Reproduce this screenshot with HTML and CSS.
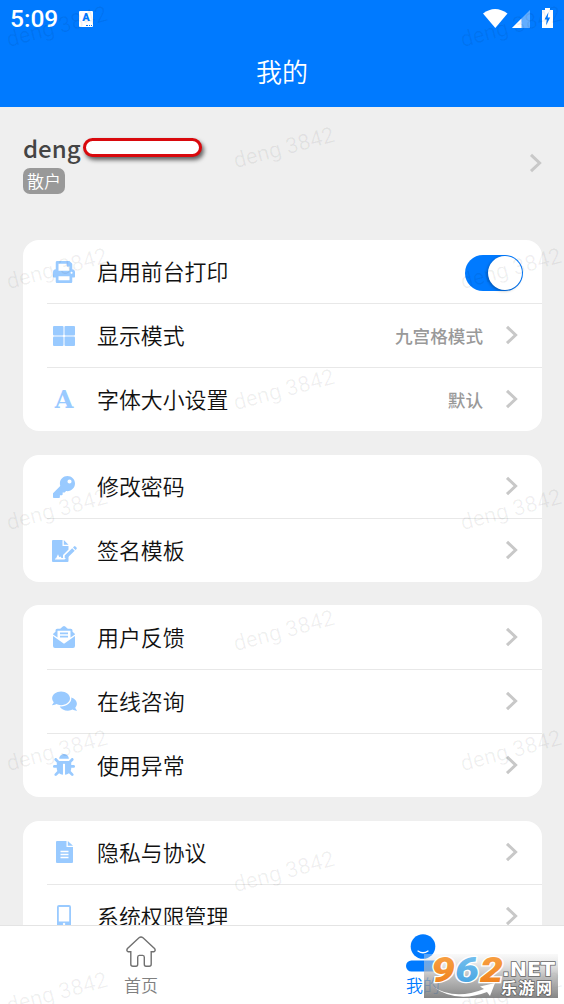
FILE: index.html
```html
<!DOCTYPE html>
<html lang="zh-CN">
<head>
<meta charset="utf-8">
<title>我的</title>
<link rel="stylesheet" href="styles.css">
</head>
<body>
<svg width="0" height="0" class="defs">
  <symbol id="arrow" viewBox="0 0 13 20"><path d="M2 1.800l8.600 8.200L2 18.200" fill="none" stroke="#c8c8c8" stroke-width="3"/></symbol>
</svg>
<div class="screen">
  <header class="header">
    <div class="status">
      <span class="clock">5:09</span>
      <span class="badge-a">A<i></i></span>
      <svg class="signals" width="72" height="24" viewBox="0 0 72 24">
        <path d="M1 5.500Q13 -3.500 25.500 5.500L13.300 20z" fill="#fff"/>
        <path d="M30 20L48 2v18z" fill="#62adff"/><path d="M30 20L39.500 10.500V20z" fill="#fff"/>
        <path d="M60 2h3V0h5v2h3v18H60z" fill="#fff"/>
        <path d="M66.500 4l-4 7.500h2.300l-.8 6 4.200-8h-2.500z" fill="#007aff"/>
      </svg>
    </div>
    <h1 class="title">我的</h1>
  </header>
  <main class="content">
    <section class="profile">
      <div>
        <div class="name-line"><span class="name">deng</span><span class="redact"></span></div>
        <span class="tag">散户</span>
      </div>
      <svg class="arrow" width="13" height="20"><use href="#arrow"/></svg>
    </section>

    <section class="card">
      <div class="row"><span class="icon"><svg width="22" height="22" viewBox="0 0 512 512"><path d="M448 192V77.250c0-8.490-3.370-16.620-9.370-22.630L393.370 9.370c-6-6-14.140-9.370-22.630-9.370H96C78.330 0 64 14.330 64 32v160c-35.350 0-64 28.650-64 64v112c0 8.840 7.160 16 16 16h48v96c0 17.670 14.330 32 32 32h320c17.670 0 32-14.330 32-32v-96h48c8.840 0 16-7.160 16-16V256c0-35.350-28.650-64-64-64zm-64 256H128v-96h256v96zm0-224H128V64h192v48c0 8.840 7.160 16 16 16h48v96zm48 72c-13.250 0-24-10.750-24-24 0-13.260 10.750-24 24-24s24 10.740 24 24c0 13.250-10.750 24-24 24z"/></svg></span>
        <div class="cell"><span class="label">启用前台打印</span><span class="switch"><i></i></span></div></div>
      <div class="row"><span class="icon"><svg width="22" height="20" viewBox="0 0 22 20"><rect width="10.500" height="9.500" rx="1"/><rect x="11.500" width="10.500" height="9.500" rx="1"/><rect y="10.500" width="10.500" height="9.500" rx="1"/><rect x="11.500" y="10.500" width="10.500" height="9.500" rx="1"/></svg></span>
        <div class="cell"><span class="label">显示模式</span><span class="value">九宫格模式</span><svg class="arrow" width="13" height="20"><use href="#arrow"/></svg></div></div>
      <div class="row"><span class="icon letter">A</span>
        <div class="cell"><span class="label">字体大小设置</span><span class="value">默认</span><svg class="arrow" width="13" height="20"><use href="#arrow"/></svg></div></div>
    </section>

    <section class="card short">
      <div class="row"><span class="icon"><svg width="22" height="22" viewBox="0 0 512 512"><path d="M512 176C512 273.200 433.200 352 336 352c-11.220 0-22.190-1.060-32.830-3.070l-24 27A24 24 0 0 1 261.220 384H224v40c0 13.250-10.750 24-24 24h-40v40c0 13.250-10.750 24-24 24H24c-13.250 0-24-10.750-24-24v-78c0-6.400 2.500-12.500 7-17l161.800-161.800C163.100 213.800 160 195.300 160 176 160 78.800 238.800 0 336 0s176 78.500 176 176zM336 128a48 48 0 1 0 96 0 48 48 0 1 0-96 0z"/></svg></span>
        <div class="cell"><span class="label">修改密码</span><svg class="arrow" width="13" height="20"><use href="#arrow"/></svg></div></div>
      <div class="row"><span class="icon"><svg width="25" height="22" viewBox="0 0 25 22"><path d="M1 0h9.500v6h6v3.500L11 15v3H9.500l-1-1.500-1.200.8-1.300-3-2 4.200H3v1h9.500l4-4V21q0 1-1 1H1q-1 0-1-1V1q0-1 1-1zM11.800 0l4.700 4.700h-4.700z"/><path d="M12.700 15.500l7.500-7.300 2.500 2.500-7.500 7.400h-2.500zM21 7.400l1-1q.8-.7 1.500 0l1 1q.7.8 0 1.500l-1 1z"/></svg></span>
        <div class="cell"><span class="label">签名模板</span><svg class="arrow" width="13" height="20"><use href="#arrow"/></svg></div></div>
    </section>

    <section class="card">
      <div class="row"><span class="icon"><svg width="22" height="22" viewBox="0 0 22 22"><path d="M0 10l11 7.700L22 10v10q0 2-2 2H2q-2 0-2-2z"/><path fill-rule="evenodd" d="M0 8.500Q0 7.700 1 7l1.500-1.200V4.500q0-1.700 1.700-1.700h3L9.800.5q1.200-1 2.400 0l2.600 2.300h3q1.700 0 1.700 1.700v1.300L21 7q1 .8 1 1.500l-4.500 3V4.800h-13v6.700z"/><path d="M7 6.600h8v1.600H7zM7 9.800h8v1.600H7z"/></svg></span>
        <div class="cell"><span class="label">用户反馈</span><svg class="arrow" width="13" height="20"><use href="#arrow"/></svg></div></div>
      <div class="row"><span class="icon"><svg width="25" height="22" viewBox="0 0 576 512"><path d="M416 192c0-88.400-93.100-160-208-160S0 103.600 0 192c0 34.300 14.100 65.900 38 92-13.400 30.200-35.500 54.200-35.800 54.500-2.200 2.300-2.800 5.700-1.500 8.700S4.800 352 8 352c36.600 0 66.900-12.300 88.700-25 32.200 15.700 70.300 25 111.300 25 114.900 0 208-71.600 208-160zm122 220c23.900-26 38-57.700 38-92 0-66.900-53.500-124.200-129.300-148.100.9 6.600 1.300 13.300 1.300 20.100 0 105.900-107.700 192-240 192-10.800 0-21.300-.8-31.700-1.900C207.800 439.600 281.800 480 368 480c41 0 79.100-9.200 111.300-25 21.800 12.700 52.100 25 88.700 25 3.200 0 6.100-1.900 7.300-4.800 1.300-2.900.7-6.300-1.500-8.700-.3-.3-22.400-24.200-35.800-54.500z"/></svg></span>
        <div class="cell"><span class="label">在线咨询</span><svg class="arrow" width="13" height="20"><use href="#arrow"/></svg></div></div>
      <div class="row"><span class="icon"><svg width="22" height="22" viewBox="0 0 512 512"><path d="M511.990 288.900c-.48 17.430-15.220 31.100-32.650 31.100H424v16c0 21.860-4.880 42.580-13.600 61.150l60.230 60.230c12.500 12.500 12.500 32.750 0 45.250-12.500 12.500-32.760 12.500-45.260 0l-54.730-54.740C345.890 467.970 314.350 480 280 480V236c0-6.630-5.370-12-12-12h-24c-6.630 0-12 5.370-12 12v244c-34.350 0-65.890-12.030-90.640-32.110l-54.730 54.740c-12.500 12.500-32.760 12.500-45.260 0-12.500-12.500-12.500-32.760 0-45.250l60.230-60.230C92.880 378.580 88 357.860 88 336v-16H32.670C15.230 320 .49 306.330.01 288.900-.48 270.820 14.030 256 32 256h56v-58.750l-46.630-46.620c-12.500-12.500-12.500-32.760 0-45.260 12.500-12.500 32.760-12.500 45.260 0L141.260 160h229.480l54.630-54.630c12.500-12.500 32.760-12.500 45.260 0 12.500 12.500 12.500 32.760 0 45.260L424 197.250V256h56c17.970 0 32.480 14.820 31.990 32.900zM257 0c-61.860 0-112 50.140-112 112h224C369 50.140 318.860 0 257 0z"/></svg></span>
        <div class="cell"><span class="label">使用异常</span><svg class="arrow" width="13" height="20"><use href="#arrow"/></svg></div></div>
    </section>

    <section class="card">
      <div class="row"><span class="icon"><svg width="17" height="22" viewBox="0 0 17 22"><path fill-rule="evenodd" d="M1 0h9.500v6H17v15q0 1-1 1H1q-1 0-1-1V1q0-1 1-1zM4.500 9.800v1.400h8V9.800zm0 3v1.400h8v-1.400zm0 3v1.400h8v-1.400zM11.800 0L17 4.800h-5.200z"/></svg></span>
        <div class="cell"><span class="label">隐私与协议</span><svg class="arrow" width="13" height="20"><use href="#arrow"/></svg></div></div>
      <div class="row"><span class="icon"><svg width="14" height="22" viewBox="0 0 14 22"><path fill-rule="evenodd" d="M2 0h10q2 0 2 2v18q0 2-2 2H2q-2 0-2-2V2q0-2 2-2zM1.800 2v14.500h10.400V2zM7 17.800a1.200 1.200 0 1 0 .1 0z"/></svg></span>
        <div class="cell"><span class="label">系统权限管理</span><svg class="arrow" width="13" height="20"><use href="#arrow"/></svg></div></div>
    </section>
  </main>
  <nav class="tabs">
    <div class="tab"><svg width="32" height="32" viewBox="0 0 32 32"><path d="M14 1.800q2-1.500 4 0L29.500 12.500q1.500 2-.5 3.200h-2.800v12.500q0 2-2 2h-3.200q-1.700 0-1.700-2v-7q0-1.800-1.600-1.800h-3.400q-1.600 0-1.600 1.800v7q0 2-1.700 2H8q-2.200 0-2.200-2V15.700H3q-2-1-.5-3.200z" fill="none" stroke="#707070" stroke-width="1.400"/></svg><span>首页</span></div>
    <div class="tab active"><svg width="34" height="38" viewBox="0 0 34 38"><circle cx="17" cy="12.500" r="12.300"/><rect y="26.500" width="34" height="11" rx="5.500"/><path d="M12 17q5 3.500 10 0" fill="none" stroke="#fff" stroke-width="1.300" stroke-linecap="round"/></svg><span>我的</span></div>
  </nav>

  <div class="marks">
    <span style="left:57px;top:27px">deng 3842</span><span style="left:511px;top:27px">deng 3842</span>
    <span style="left:284px;top:148px">deng 3842</span>
    <span style="left:57px;top:269px">deng 3842</span><span style="left:511px;top:269px">deng 3842</span>
    <span style="left:284px;top:390px">deng 3842</span>
    <span style="left:57px;top:510px">deng 3842</span><span style="left:511px;top:510px">deng 3842</span>
    <span style="left:284px;top:631px">deng 3842</span>
    <span style="left:57px;top:751px">deng 3842</span><span style="left:511px;top:751px">deng 3842</span>
    <span style="left:284px;top:872px">deng 3842</span>
    <span style="left:57px;top:993px">deng 3842</span><span style="left:511px;top:993px">deng 3842</span>
  </div>

  <svg class="site-logo" width="134" height="44" viewBox="0 0 134 44">
    <defs>
      <linearGradient id="plate" x1="0" y1="0" x2="0" y2="1"><stop offset="0" stop-color="#eee" stop-opacity=".35"/><stop offset=".5" stop-color="#aaa" stop-opacity=".75"/><stop offset="1" stop-color="#7c7c7c" stop-opacity=".93"/></linearGradient>
      <linearGradient id="orange" x1="0" y1="0" x2="0" y2="1"><stop offset="0" stop-color="#f9a64a"/><stop offset="1" stop-color="#ee7a14"/></linearGradient>
      <linearGradient id="blue" x1="0" y1="0" x2="0" y2="1"><stop offset="0" stop-color="#7cc4f0"/><stop offset="1" stop-color="#3f9fe0"/></linearGradient>
    </defs>
    <rect width="134" height="44" fill="url(#plate)"/>
    <path d="M8 32Q30 47 60 35l-4-2.500 15-3.500-5 13-3-4Q32 50 8 32z" fill="#fff"/>
    <g class="digits"><text x="7" y="28" textLength="24" lengthAdjust="spacingAndGlyphs" fill="url(#orange)">9</text><text x="31" y="28" textLength="24" lengthAdjust="spacingAndGlyphs" fill="url(#blue)">6</text><text x="56" y="28" textLength="23" lengthAdjust="spacingAndGlyphs" fill="url(#orange)">2</text></g>
    <text class="net" x="78" y="22" textLength="53" lengthAdjust="spacingAndGlyphs">.NET</text>
    <text class="site" x="77" y="39.500" textLength="51">乐游网</text>
  </svg>
</div>
</body>
</html>
```

FILE: styles.css
```css
* { box-sizing: border-box; }
body { margin: 0; font-family: "Noto Sans CJK SC", sans-serif; }
.defs { position: absolute; }
.screen { position: relative; width: 564px; height: 1004px; overflow: hidden; display: flex; flex-direction: column; background: #efefef; }
.header { height: 107px; flex: none; background: #007aff; color: #fff; display: flex; flex-direction: column; }
.status { display: flex; align-items: center; height: 38px; padding: 0 11px 0 10px; }
.clock { font: 500 24.500px/38px Roboto, sans-serif; width: 69px; }
.badge-a { width: 14px; height: 16px; border-radius: 1px; background: #fff; color: #007aff; font: 900 11px/13px Roboto, sans-serif; text-align: center; position: relative; }
.badge-a i { position: absolute; right: 1px; bottom: 1px; width: 6px; border-bottom: 1px dotted #007aff; }
.signals { margin-left: auto; margin-right: -1px; margin-top: 2px; flex: none; }
.title { margin: 0; font-size: 26px; font-weight: 350; line-height: 66px; text-align: center; }
.content { flex: 1; min-height: 0; overflow: hidden; padding: 0 22px 0 23px; display: flex; flex-direction: column; gap: 23.600px; }
.profile { height: 109.400px; flex: none; display: flex; justify-content: space-between; align-items: center; padding-top: 2px; }
.name-line { display: flex; align-items: center; height: 32px; }
.name { color: #444; font-weight: 500; font-size: 24px; line-height: 32px; }
.redact { width: 119px; height: 19px; border: 3px solid #d9090d; border-radius: 10px; background: #fff; box-shadow: 2px 3px 4px rgba(0,0,0,.6); margin-left: 2px; }
.tag { display: block; width: 42px; height: 26px; margin-top: 4px; border-radius: 7px; background: #999; color: #fff; font-size: 17px; font-weight: 350; line-height: 25px; text-align: center; }
.card { flex: none; background: #fff; border-radius: 16px; padding-left: 24px; overflow: hidden; }
.row { display: flex; height: 64.300px; }
.row:first-child { height: 63.200px; }
.row:last-child { height: 64px; }
.short .row:last-child { height: 63.600px; }
.row + .row .cell { border-top: 1px solid #e8e8e8; }
.row + .row .icon { border-top: 1px solid #e8e8e8; }
.icon { width: 34px; display: flex; align-items: center; justify-content: center; fill: #99caff; color: #99caff; }
.letter { font: bold 24px "DejaVu Serif", serif; }
.cell { flex: 1; display: flex; align-items: center; padding: 0 24px 0 16px; }
.label { color: #111; font-size: 21.900px; font-weight: 350; line-height: 32px; margin-right: auto; padding-bottom: 1px; }
.value { color: #999; font-size: 17.600px; font-weight: 500; margin-right: 22px; }
.cell .arrow { margin-bottom: 1px; }
.switch { width: 58px; height: 36px; background: #007aff; border-radius: 18px; display: flex; justify-content: flex-end; padding: 1px; margin-right: -5px; margin-top: 3px; }
.switch i { width: 34px; height: 34px; border-radius: 50%; background: #fff; box-shadow: -1px 1px 3px rgba(0,0,0,.3); }
.tabs { height: 79px; flex: none; display: flex; background: #fff; border-top: 1px solid #e4e4e4; }
.tab { flex: 1; display: flex; flex-direction: column; align-items: center; padding-top: 10px; color: #808080; font-size: 17px; font-weight: 350; }
.tab span { line-height: 24px; margin-top: 5px; }
.tab.active { color: #007aff; fill: #007aff; padding-top: 8px; }
.tab.active span { margin-top: 1px; }
.marks { position: absolute; inset: 0; pointer-events: none; }
.marks span { position: absolute; white-space: nowrap; font: 22px/24px Roboto, sans-serif; color: rgba(0,0,0,.06); transform: translate(-50%,-50%) rotate(-15deg); }
.site-logo { position: absolute; left: 424px; top: 954px; overflow: visible; }
.digits { font: italic 900 35px Roboto, sans-serif; stroke: #fff; stroke-width: 2.500px; paint-order: stroke; }
.net { font: bold 20px "DejaVu Sans", sans-serif; fill: #fff; stroke: #666; stroke-width: 1.500px; paint-order: stroke; }
.site { font: 700 16px "Noto Sans CJK SC", sans-serif; fill: #fff; stroke: #666; stroke-width: 1.500px; paint-order: stroke; }
```
